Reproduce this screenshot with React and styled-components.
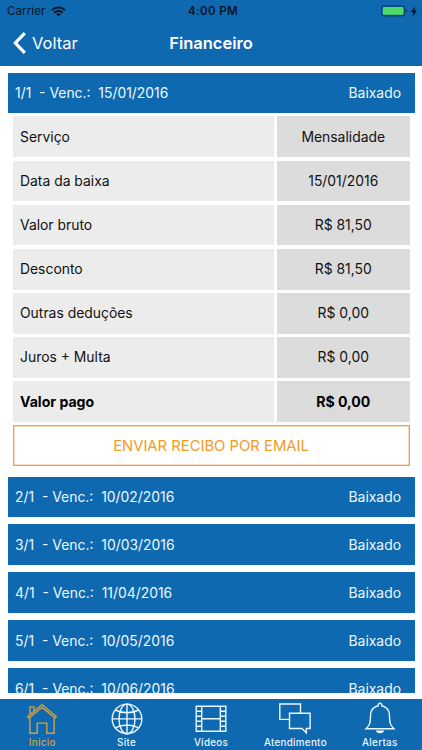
import React from 'react';
import styled, { createGlobalStyle } from 'styled-components';

const GlobalStyle = createGlobalStyle`
  * {
    box-sizing: border-box;
  }

  body {
    margin: 0;
    background: #fff;
    font-family: Inter, "Liberation Sans", sans-serif;
  }
`;

const Screen = styled.div`
  display: flex;
  flex-direction: column;
  width: 422px;
  height: 750px;
  overflow: hidden;
  background: #fff;
`;

const Header = styled.header`
  flex: none;
  height: 65.5px;
  background: #0f69b1;
`;

const StatusBar = styled.div`
  display: grid;
  grid-template-columns: 1fr auto 1fr;
  align-items: center;
  height: 22px;
  padding: 0 5px 0 7px;
  color: #061525;
  font-size: 11.5px;
`;

const Carrier = styled.div`
  display: flex;
  align-items: center;
  gap: 6px;
  letter-spacing: 0.1px;
`;

const Clock = styled.div`
  padding-left: 2px;
  font-weight: 600;
  letter-spacing: 0.4px;
`;

const Power = styled.div`
  display: flex;
  align-items: center;
  justify-content: flex-end;
  gap: 3px;
`;

const NavBar = styled.div`
  display: grid;
  grid-template-columns: 1fr auto 1fr;
  align-items: center;
  height: 42px;
  padding: 0 13px;
  color: #fff;
`;

const BackButton = styled.button`
  display: flex;
  align-items: center;
  gap: 6px;
  padding: 0;
  border: 0;
  background: none;
  color: inherit;
  font: inherit;
  font-size: 16.5px;
`;

const Title = styled.h1`
  margin: 0;
  font-size: 16.5px;
  font-weight: 600;
`;

const Content = styled.main`
  flex: none;
  height: 627.2px;
  padding: 7.2px 7.5px 0;
  overflow: hidden;
`;

const Bill = styled.div`
  display: flex;
  align-items: center;
  justify-content: space-between;
  height: 40.6px;
  margin-bottom: 7.2px;
  padding: 1px 13.5px 0 7.5px;
  background: #0f69b1;
  color: #eef8ff;
  font-size: 13.9px;
  white-space: pre;
`;

const Details = styled.div`
  display: grid;
  grid-template-columns: 261px 1fr;
  gap: 3.5px;
  margin: -4px 5px 10.2px;
`;

const Cell = styled.div`
  display: flex;
  align-items: center;
  justify-content: ${props => (props.$value ? 'center' : 'flex-start')};
  height: 40.65px;
  padding-left: ${props => (props.$value ? '0' : '7.5px')};
  background: ${props => (props.$value ? '#dcdcdc' : '#ececec')};
  color: ${props => (props.$bold ? '#000' : '#111')};
  font-size: ${props => (props.$bold ? '14.1px' : '13.9px')};
  font-weight: ${props => (props.$bold ? 700 : 400)};
`;

const ReceiptButton = styled.button`
  grid-column: 1 / -1;
  height: 41px;
  padding: 1px 0 0;
  border: 1px solid #f3a049;
  box-shadow: inset 0 0 0 0.5px #f6b877;
  background: #fff;
  color: #f39a23;
  font-family: inherit;
  font-size: 14.8px;
`;

const TabBar = styled.nav`
  display: grid;
  grid-template-columns: repeat(5, 1fr);
  flex: none;
  height: 50.5px;
  margin-top: 6.8px;
  background: #0f69b1;
`;

const Tab = styled.div`
  display: flex;
  flex-direction: column;
  align-items: center;
  padding-top: 3px;
  color: ${props => (props.$active ? '#d3a03f' : '#eaf8ff')};
  font-size: 9.8px;
  font-weight: 500;
  line-height: 12px;
  letter-spacing: 0.3px;

  svg {
    display: block;
    flex: none;
    margin-bottom: 0.5px;
  }
`;

const WifiIcon = () => (
  <svg width="15" height="11" viewBox="0 0 15 11" fill="none" stroke="currentColor" strokeWidth="2">
    <path d="M1 4.2a9.2 9.2 0 0 1 13 0M3.4 6.7a5.8 5.8 0 0 1 8.2 0" />
    <path d="M7.5 10.6 5.2 8.3a3.3 3.3 0 0 1 4.6 0z" fill="currentColor" stroke="none" />
  </svg>
);

const BatteryIcon = () => (
  <svg width="27" height="12" viewBox="0 0 27 12">
    <rect x="0.6" y="0.9" width="23" height="10" rx="2.2" fill="none" stroke="#08406f" strokeWidth="1.1" />
    <rect x="1.8" y="2.1" width="20.6" height="7.6" rx="1" fill="#4cd964" />
    <path d="M25 4.3q1.3.5 1.3 1.6T25 7.5z" fill="#08406f" />
  </svg>
);

const BoltIcon = () => (
  <svg width="6" height="11" viewBox="0 0 6 11" fill="currentColor">
    <path d="M4 .3 0 6.2h2.4L1.6 10.7 6 4.5H3.4z" />
  </svg>
);

const BackIcon = () => (
  <svg width="13" height="22" viewBox="0 0 13 22" fill="none" stroke="currentColor" strokeWidth="3.2">
    <path d="M11.8 1.2 2.3 11l9.5 9.8" />
  </svg>
);

const TabIcon = ({ children }) => (
  <svg width="34" height="34" viewBox="0 0 34 34" fill="none" stroke="currentColor" strokeWidth="1.4">
    {children}
  </svg>
);

const HomeIcon = () => (
  <TabIcon>
    <path d="M2.7 14.5 17 2.6l14.3 11.9-1.3 1.6L17 5.5 4 16.1z" />
    <path d="M4.9 12.3V4.9h4.2v4.2M4.9 15.6v15.6h7.3V21.1h9.6v10.1h7.3V15.6" />
  </TabIcon>
);

const GlobeIcon = () => (
  <TabIcon>
    <circle cx="17" cy="16.9" r="14.8" />
    <ellipse cx="17" cy="16.9" rx="8" ry="14.8" />
    <path d="M17 2.1v29.6M2.2 16.9h29.6M5 8q12 5.6 24 0M5 25.8q12-5.6 24 0" />
  </TabIcon>
);

const FilmIcon = () => (
  <TabIcon>
    <path d="M2.2 4.2h29.6v25H2.2zM7.7 4.2v25M26.3 4.2v25M7.7 16.7h18.6" />
    <path d="M2.2 9.2h5.5M2.2 14.2h5.5M2.2 19.2h5.5M2.2 24.2h5.5M26.3 9.2h5.5M26.3 14.2h5.5M26.3 19.2h5.5M26.3 24.2h5.5" />
  </TabIcon>
);

const ChatIcon = () => (
  <TabIcon>
    <path d="M11.2 17.4H1.8V2h20.7v9.2" />
    <path d="M11.5 11.3h20.6v15.2h-3.8v4.4L24 26.5H11.5z" />
  </TabIcon>
);

const BellIcon = () => (
  <TabIcon>
    <path d="M15.2 3.8a1.9 1.9 0 1 1 3.6 0c4.7 1.2 7.7 5 7.7 10.2 0 7.1.7 9 4.5 12.7H3c3.8-3.7 4.5-5.6 4.5-12.7 0-5.2 3-9 7.7-10.2z" />
    <path d="M12.8 28.5h8.4a4.3 3.4 0 0 1-8.4 0z" fill="currentColor" stroke="none" />
  </TabIcon>
);

const details = [
  { label: 'Serviço', value: 'Mensalidade' },
  { label: 'Data da baixa', value: '15/01/2016' },
  { label: 'Valor bruto', value: 'R$ 81,50' },
  { label: 'Desconto', value: 'R$ 81,50' },
  { label: 'Outras deduções', value: 'R$ 0,00' },
  { label: 'Juros + Multa', value: 'R$ 0,00' },
  { label: 'Valor pago', value: 'R$ 0,00', bold: true },
];

const bills = [
  { number: '1/1', date: '15/01/2016', open: true },
  { number: '2/1', date: '10/02/2016' },
  { number: '3/1', date: '10/03/2016' },
  { number: '4/1', date: '11/04/2016' },
  { number: '5/1', date: '10/05/2016' },
  { number: '6/1', date: '10/06/2016' },
];

const tabs = [
  { label: 'Inicio', Icon: HomeIcon, active: true },
  { label: 'Site', Icon: GlobeIcon },
  { label: 'Vídeos', Icon: FilmIcon },
  { label: 'Atendimento', Icon: ChatIcon },
  { label: 'Alertas', Icon: BellIcon },
];

function App() {
  return (
    <Screen>
      <GlobalStyle />
      <Header>
        <StatusBar>
          <Carrier>
            Carrier
            <WifiIcon />
          </Carrier>
          <Clock>4:00 PM</Clock>
          <Power>
            <BatteryIcon />
            <BoltIcon />
          </Power>
        </StatusBar>
        <NavBar>
          <BackButton>
            <BackIcon />
            Voltar
          </BackButton>
          <Title>Financeiro</Title>
        </NavBar>
      </Header>

      <Content>
        {bills.map(bill => (
          <React.Fragment key={bill.number}>
            <Bill>
              <span>{`${bill.number}  - Venc.:  ${bill.date}`}</span>
              <span>Baixado</span>
            </Bill>
            {bill.open && (
              <Details>
                {details.map(item => (
                  <React.Fragment key={item.label}>
                    <Cell $bold={item.bold}>{item.label}</Cell>
                    <Cell $value $bold={item.bold}>{item.value}</Cell>
                  </React.Fragment>
                ))}
                <ReceiptButton>ENVIAR RECIBO POR EMAIL</ReceiptButton>
              </Details>
            )}
          </React.Fragment>
        ))}
      </Content>

      <TabBar>
        {tabs.map(({ label, Icon, active }) => (
          <Tab key={label} $active={active}>
            <Icon />
            {label}
          </Tab>
        ))}
      </TabBar>
    </Screen>
  );
}

export default App;
